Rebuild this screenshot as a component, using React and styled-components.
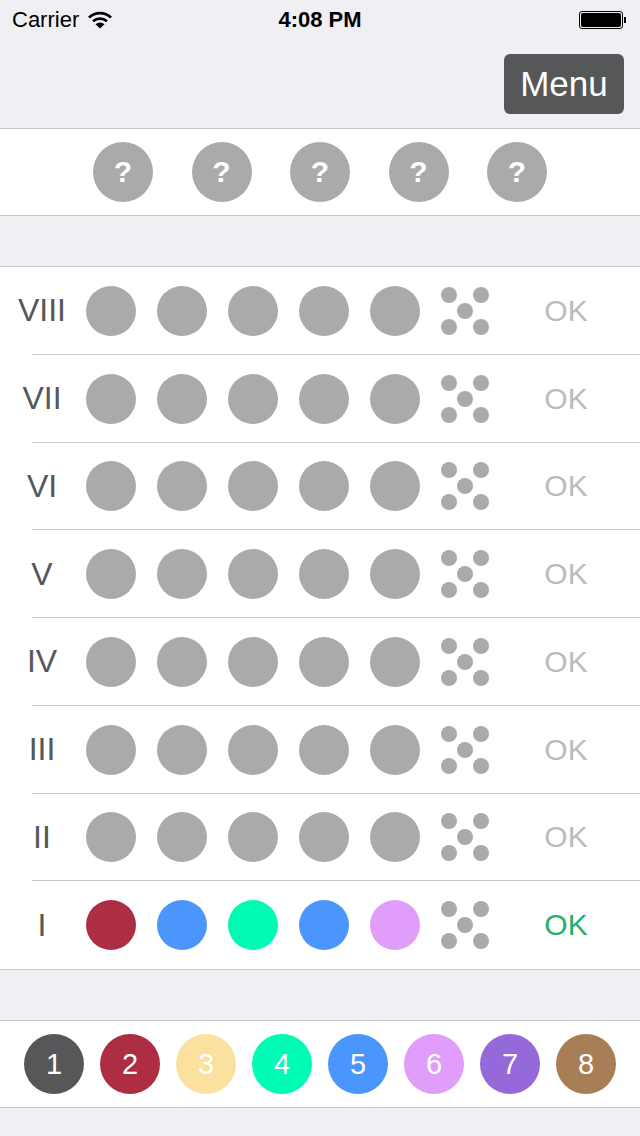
import React from "react";
import styled, { createGlobalStyle } from "styled-components";

const GlobalStyle = createGlobalStyle`
  body {
    margin: 0;
    background: #efeff4;
    font-family: "Liberation Sans", Arial, sans-serif;
  }
`;

const COLORS = ["#555759", "#ad2e43", "#fae1a0", "#00fcb4", "#4b96fc", "#e09efa", "#9569da", "#a87e57"];
const ROWS = ["VIII", "VII", "VI", "V", "IV", "III", "II", "I"];
const GUESS = ["#ad2e43", "#4b96fc", "#00fcb4", "#4b96fc", "#e09efa"];

const Screen = styled.div`
  width: 640px;
  min-height: 1136px;
  background: #efeff4;
  display: flex;
  flex-direction: column;
`;

const StatusBar = styled.div`
  height: 40px;
  display: flex;
  align-items: center;
  justify-content: space-between;
  padding: 0 14px 0 12px;
  position: relative;
  font-size: 22px;
  color: #000;
`;

const Carrier = styled.div`
  display: flex;
  align-items: center;
  gap: 9px;
`;

const Time = styled.div`
  position: absolute;
  left: 0;
  right: 0;
  text-align: center;
  font-weight: bold;
  pointer-events: none;
`;

const Battery = styled.div`
  display: flex;
  align-items: center;
`;

const BatteryBody = styled.div`
  width: 40px;
  height: 14px;
  border: 1px solid #000;
  border-radius: 3px;
  padding: 1px;
  box-sizing: content-box;
  &::before {
    content: "";
    display: block;
    width: 100%;
    height: 100%;
    background: #000;
    border-radius: 2px;
  }
`;

const BatteryNub = styled.div`
  width: 2px;
  height: 6px;
  background: #000;
  margin-left: 1px;
`;

const NavBar = styled.div`
  height: 88px;
  display: flex;
  justify-content: flex-end;
  align-items: flex-start;
  padding: 14px 16px 0 0;
  box-sizing: border-box;
`;

const MenuButton = styled.div`
  width: 120px;
  height: 60px;
  background: #555759;
  border-radius: 6px;
  color: #fff;
  font-size: 35px;
  display: flex;
  align-items: center;
  justify-content: center;
`;

const Panel = styled.div`
  background: #fff;
  border-top: 1px solid #c8c7cc;
  border-bottom: 1px solid #c8c7cc;
`;

const SecretRow = styled.div`
  height: 86px;
  display: flex;
  align-items: center;
  justify-content: center;
  gap: 38.5px;
`;

const Spacer = styled.div`
  height: 50px;
`;

const Peg = styled.div`
  width: ${(p) => p.size}px;
  height: ${(p) => p.size}px;
  border-radius: 50%;
  background: ${(p) => p.color || "#aaaaaa"};
  color: #fff;
  display: flex;
  align-items: center;
  justify-content: center;
  font-size: ${(p) => (p.bold ? 30 : 29)}px;
  font-weight: ${(p) => (p.bold ? "bold" : "normal")};
  flex-shrink: 0;
`;

const Row = styled.div`
  height: 87.75px;
  display: flex;
  align-items: center;
  position: relative;
  box-sizing: border-box;
  &:not(:last-child)::after {
    content: "";
    position: absolute;
    left: 32px;
    right: 0;
    bottom: 0;
    height: 1px;
    background: #c8c7cc;
  }
`;

const Label = styled.div`
  width: 84px;
  text-align: center;
  font-size: 32px;
  color: #555759;
  flex-shrink: 0;
`;

const Pegs = styled.div`
  display: flex;
  gap: 21px;
  margin-left: 2px;
`;

const Hint = styled.svg`
  margin-left: 21px;
  flex-shrink: 0;
`;

const Ok = styled.div`
  flex: 1;
  padding-left: 3px;
  text-align: center;
  font-size: 30px;
  color: ${(p) => (p.active ? "#27ae6a" : "#bbbbbb")};
`;

const PaletteRow = styled.div`
  height: 86px;
  display: flex;
  align-items: center;
  justify-content: center;
  gap: 16px;
`;

const Wifi = () => (
  <svg width="24" height="18" viewBox="0 0 24 18">
    <path d="M1 6.5 A16 16 0 0 1 23 6.5" fill="none" stroke="#000" strokeWidth="2.6" />
    <path d="M5 10.3 A10.5 10.5 0 0 1 19 10.3" fill="none" stroke="#000" strokeWidth="2.6" />
    <path d="M12 17.5 L7.5 13.2 A6.5 6.5 0 0 1 16.5 13.2 Z" fill="#000" />
  </svg>
);

const HintIcon = () => (
  <Hint width="48" height="48" viewBox="0 0 48 48">
    {[
      [8, 8],
      [40, 8],
      [24, 24],
      [8, 40],
      [40, 40],
    ].map(([cx, cy], i) => (
      <circle key={i} cx={cx} cy={cy} r="8" fill="#aaaaaa" />
    ))}
  </Hint>
);

export default function App() {
  return (
    <Screen>
      <GlobalStyle />
      <StatusBar>
        <Carrier>
          Carrier <Wifi />
        </Carrier>
        <Time>4:08 PM</Time>
        <Battery>
          <BatteryBody />
          <BatteryNub />
        </Battery>
      </StatusBar>
      <NavBar>
        <MenuButton>Menu</MenuButton>
      </NavBar>

      <Panel>
        <SecretRow>
          {[0, 1, 2, 3, 4].map((i) => (
            <Peg key={i} size={60} bold>
              ?
            </Peg>
          ))}
        </SecretRow>
      </Panel>

      <Spacer />

      <Panel>
        {ROWS.map((r) => {
          const last = r === "I";
          return (
            <Row key={r}>
              <Label>{r}</Label>
              <Pegs>
                {[0, 1, 2, 3, 4].map((i) => (
                  <Peg key={i} size={50} color={last ? GUESS[i] : undefined} />
                ))}
              </Pegs>
              <HintIcon />
              <Ok active={last}>OK</Ok>
            </Row>
          );
        })}
      </Panel>

      <Spacer />

      <Panel>
        <PaletteRow>
          {COLORS.map((c, i) => (
            <Peg key={c} size={60} color={c}>
              {i + 1}
            </Peg>
          ))}
        </PaletteRow>
      </Panel>
    </Screen>
  );
}
